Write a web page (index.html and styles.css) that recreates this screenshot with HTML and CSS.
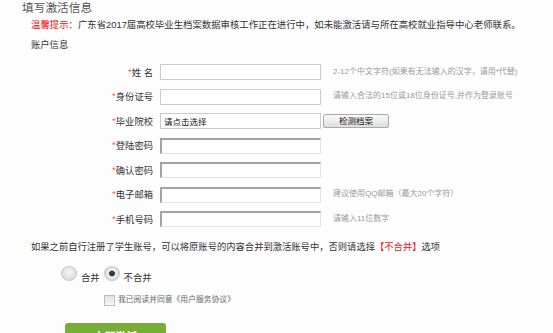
FILE: index.html
```html
<!DOCTYPE html>
<html>
<head>
    <meta charset="utf-8">
    <title>填写激活信息</title>
    <link rel="stylesheet" href="styles.css">
</head>
<body>
    <h2 class="title">填写激活信息</h2>
    <p class="tip"><span class="tipHead">温馨提示：</span>广东省2017届高校毕业生档案数据审核工作正在进行中，如未能激活请与所在高校就业指导中心老师联系。</p>
    <p class="section">账户信息</p>

    <form class="regForm" action="#" method="post">
        <div class="row">
            <label class="label"><span class="star">*</span>姓 名</label>
            <input type="text" class="box" name="name">
            <span class="hint">2-12个中文字符(如果有无法输入的汉字，请用*代替)</span>
        </div>
        <div class="row">
            <label class="label"><span class="star">*</span>身份证号</label>
            <input type="text" class="box" name="idcard">
            <span class="hint">请输入合法的15位或18位身份证号,并作为登录账号</span>
        </div>
        <div class="row">
            <label class="label"><span class="star">*</span>毕业院校</label>
            <input type="text" class="box" name="school" value="请点击选择" readonly>
            <button type="button" class="checkBtn">检测档案</button>
        </div>
        <div class="row">
            <label class="label"><span class="star">*</span>登陆密码</label>
            <input type="password" class="box inset" name="password">
        </div>
        <div class="row">
            <label class="label"><span class="star">*</span>确认密码</label>
            <input type="password" class="box inset" name="password2">
        </div>
        <div class="row">
            <label class="label"><span class="star">*</span>电子邮箱</label>
            <input type="text" class="box inset" name="email">
            <span class="hint">建议使用QQ邮箱（最大20个字符）</span>
        </div>
        <div class="row">
            <label class="label"><span class="star">*</span>手机号码</label>
            <input type="text" class="box inset" name="mobile">
            <span class="hint">请输入11位数字</span>
        </div>

        <p class="merge">如果之前自行注册了学生账号，可以将原账号的内容合并到激活账号中，否则请选择<span class="red">【不合并】</span>选项</p>

        <div class="radios">
            <label class="opt"><input type="radio" name="merge" value="1"><span>合并</span></label>
            <label class="opt"><input type="radio" name="merge" value="0" checked><span>不合并</span></label>
        </div>

        <div class="agree">
            <label><input type="checkbox" name="agree"><span>我已阅读并同意《用户服务协议》</span></label>
        </div>

        <button type="submit" class="submitBtn">立即激活</button>
    </form>
</body>
</html>
```

FILE: styles.css
```css
body {
    margin: 0;
    background-color: #fdfdfe;
    font-family: "Liberation Sans", "Noto Sans CJK SC", sans-serif;
    color: #333;
}

.title {
    margin: 0 0 0 22px;
    font-size: 11.7px;
    line-height: 16px;
    font-weight: normal;
    color: #555;
}

.tip {
    margin: 2px 0 0 31px;
    font-size: 9.4px;
    line-height: 14px;
    color: #333;
}

.tipHead {
    color: #f01010;
}

.section {
    margin: 6px 0 0 31px;
    font-size: 9.3px;
    line-height: 14px;
}

.regForm {
    margin-top: 8px;
}

.row {
    display: flex;
    align-items: center;
    height: 24.5px;
}

.label {
    width: 153px;
    text-align: right;
    font-size: 9.3px;
    line-height: 14px;
    color: #333;
}

.star {
    color: #f5683a;
    font-size: 9.5px;
    vertical-align: 1px;
}

.box {
    box-sizing: border-box;
    width: 161px;
    height: 16px;
    margin: 0 0 0 7px;
    padding: 0 3px;
    border: 1px solid #c7ccd4;
    background: #fff;
    font-family: inherit;
    font-size: 8.5px;
    color: #111;
    outline: none;
}

.inset {
    border-style: solid;
    border-width: 2px 1px 1px 2px;
    border-color: #a3a3a3 #e4e4e4 #e4e4e4 #a3a3a3;
}

.hint {
    margin-left: 12px;
    font-size: 8px;
    color: #9a9a9a;
    margin-top: -4px;
}

.checkBtn {
    box-sizing: border-box;
    width: 66px;
    height: 14px;
    margin-left: 2px;
    padding: 0;
    border: 1px solid #a9a9a9;
    border-radius: 2px;
    background: linear-gradient(#fafafa, #dedede);
    font-family: inherit;
    font-size: 8.5px;
    line-height: 12px;
    color: #111;
}

.merge {
    margin: 8.5px 0 0 31px;
    font-size: 9.3px;
    line-height: 14px;
    color: #333;
}

.red {
    color: #f01818;
}

.radios {
    display: flex;
    gap: 4px;
    margin: 12px 0 0 61px;
    height: 18px;
}

.opt {
    display: flex;
    align-items: flex-start;
    font-size: 9.3px;
    line-height: 14px;
    color: #333;
}

.opt span {
    margin: 5px 0 0 4px;
}

.opt input {
    appearance: none;
    box-sizing: border-box;
    width: 16px;
    height: 15px;
    margin: 0;
    border: 1px solid #c9c9c9;
    border-radius: 50%;
    background: radial-gradient(circle at 50% 40%, #f7f7f7, #d3d3d3);
}

.opt input:checked {
    background: radial-gradient(circle, #3a3a3a 0 2.6px, #eeeeee 3.2px, #cfcfcf);
}

.agree {
    margin: 10px 0 0 104px;
    font-size: 7.8px;
    line-height: 12px;
    color: #666;
}

.agree label {
    display: flex;
    align-items: center;
}

.agree input {
    appearance: none;
    box-sizing: border-box;
    width: 11px;
    height: 11px;
    margin: 0 3px 0 0;
    border: 1px solid #bdbdbd;
    background: linear-gradient(#e4e4e4, #f6f6f6);
}

.submitBtn {
    display: block;
    width: 101px;
    height: 26px;
    margin: 17px 0 0 65px;
    border: none;
    border-radius: 3px;
    background-color: #78ae37;
    color: #fff;
    font-family: inherit;
    font-size: 11px;
    font-weight: bold;
}
```
